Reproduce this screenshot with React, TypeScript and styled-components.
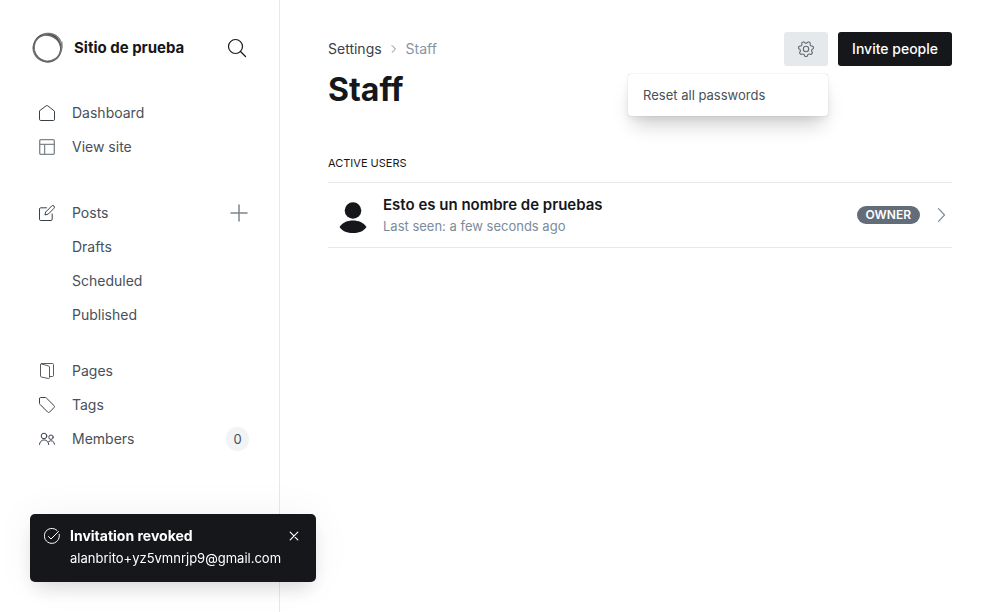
import React from "react";
import styled, { createGlobalStyle } from "styled-components";

const GlobalStyle = createGlobalStyle`
  *, *::before, *::after { box-sizing: border-box; }
  body {
    margin: 0;
    background: #fff;
    color: #15171a;
    font-family: Inter, "Liberation Sans", sans-serif;
    font-size: 14px;
    line-height: 20px;
  }
  h1, h2, h3, p, ul, ol { margin: 0; padding: 0; }
  ul, ol { list-style: none; }
  a { color: inherit; text-decoration: none; }
  button { font: inherit; color: inherit; border: 0; padding: 0; background: none; cursor: pointer; }
  svg { display: block; flex: none; }
`;

const Page = styled.div`
  display: flex;
  min-height: 100vh;
`;

const Sidebar = styled.aside`
  flex: none;
  width: 280px;
  padding: 32px 30px 32px 32px;
  border-right: 1px solid #e6e9eb;
`;

const SiteHeader = styled.header`
  display: flex;
  align-items: center;
  height: 32px;
  margin-bottom: 32px;
`;

const SiteName = styled.span`
  flex: 1;
  margin-left: 10px;
  font-size: 15px;
  font-weight: 700;
`;

const SearchButton = styled.button`
  margin-right: 2px;
`;

const NavGroup = styled.ul<{ $gap: number }>`
  margin-top: ${(p) => p.$gap}px;
`;

const NavItem = styled.li`
  display: flex;
  align-items: center;
  justify-content: space-between;
  height: 34px;
`;

const NavLink = styled.a`
  display: flex;
  flex: 1;
  align-items: center;
  color: #485059;
`;

const NavIcon = styled.span`
  display: flex;
  justify-content: center;
  width: 30px;
  margin-right: 10px;
`;

const Count = styled.span`
  min-width: 23px;
  border-radius: 12px;
  background: #f1f3f4;
  color: #485059;
  font-size: 13px;
  line-height: 24px;
  text-align: center;
`;

const Main = styled.main`
  flex: 1;
  min-width: 0;
  padding: 32px 48px;
`;

const PageHeader = styled.header`
  display: flex;
  justify-content: space-between;
  align-items: flex-start;
`;

const Breadcrumb = styled.ol`
  display: flex;
  align-items: center;
  gap: 8px;
  height: 34px;
`;

const Crumb = styled.li<{ $current?: boolean }>`
  color: ${(p) => (p.$current ? "#8695a4" : "#394047")};
`;

const Title = styled.h1`
  font-size: 32px;
  font-weight: 700;
  line-height: 48px;
`;

const Actions = styled.div`
  display: flex;
  gap: 10px;
`;

const MenuAnchor = styled.div`
  position: relative;
`;

const GearButton = styled.button`
  display: flex;
  align-items: center;
  justify-content: center;
  width: 44px;
  height: 34px;
  border-radius: 3px;
  background: #e6e9eb;
`;

const InviteButton = styled.button`
  height: 34px;
  padding: 0 14px;
  border-radius: 3px;
  background: #15171a;
  color: #fff;
  font-weight: 500;
`;

const Menu = styled.ul`
  position: absolute;
  top: 42px;
  right: 0;
  width: 200px;
  padding: 6px 0;
  border-radius: 3px;
  background: #fff;
  box-shadow: 0 0 1px rgba(0, 0, 0, 0.3), 0 3px 7px rgba(0, 0, 0, 0.05), 0 13px 20px -5px rgba(0, 0, 0, 0.2);
`;

const MenuItem = styled.button`
  width: 100%;
  padding: 0 15px;
  color: #485059;
  font-size: 13px;
  line-height: 30px;
  text-align: left;
`;

const SectionLabel = styled.h2`
  margin: 40px 0 10px;
  font-size: 11px;
  font-weight: 400;
  line-height: 18px;
  text-transform: uppercase;
`;

const UserList = styled.ul`
  border-top: 1px solid #e6e9eb;
`;

const UserRow = styled.a`
  display: flex;
  align-items: center;
  height: 65px;
  padding: 0 4px 0 10px;
  border-bottom: 1px solid #e6e9eb;
`;

const UserText = styled.div`
  flex: 1;
  margin-left: 15px;
`;

const UserName = styled.h3`
  font-size: 15px;
  font-weight: 600;
  line-height: 22px;
`;

const LastSeen = styled.p`
  color: #7c8b9a;
  font-size: 13px;
  line-height: 20px;
`;

const RoleBadge = styled.span`
  margin-right: 14px;
  padding: 0 9px;
  border-radius: 9px;
  background: #626d79;
  color: #fff;
  font-size: 12px;
  font-weight: 600;
  line-height: 18px;
`;

const Toast = styled.div`
  position: fixed;
  left: 30px;
  bottom: 30px;
  display: flex;
  align-items: flex-start;
  width: 286px;
  padding: 11px 17px 12px 14px;
  border-radius: 5px;
  background: #15171a;
  color: #fff;
  box-shadow: 0 0 40px rgba(0, 0, 0, 0.05), 0 10px 20px -5px rgba(0, 0, 0, 0.15);
`;

const ToastText = styled.div`
  flex: 1;
  margin-left: 10px;
`;

const ToastTitle = styled.p`
  font-weight: 700;
  line-height: 22px;
`;

const ToastDetail = styled.p`
  font-size: 13px;
  line-height: 23px;
`;

const ToastIcon = styled.span`
  display: flex;
  align-items: center;
  height: 22px;
`;

const ToastClose = styled.button`
  display: flex;
  align-items: center;
  height: 22px;
`;

type IconProps = { size?: number; box?: number; color?: string; width?: number; children: React.ReactNode };

const Icon = ({ size = 16, box = 16, color = "#394047", width = 1, children }: IconProps) => (
  <svg
    width={size}
    height={size}
    viewBox={`0 0 ${box} ${box}`}
    fill="none"
    stroke={color}
    strokeWidth={width}
    strokeLinecap="round"
    strokeLinejoin="round"
    aria-hidden="true"
  >
    {children}
  </svg>
);

const icons = {
  home: (
    <Icon>
      <path d="M.5 6.2v8.1c0 .7.5 1.2 1.2 1.2h12.6c.7 0 1.2-.5 1.2-1.2V6.2L8.8.8a1.3 1.3 0 0 0-1.6 0Z" />
    </Icon>
  ),
  layout: (
    <Icon color="#7d858d" width={1.3}>
      <rect x=".7" y=".7" width="14.600" height="14.600" rx="1.2" />
      <path d="M.7 5.300h14.600M5.600 5.300v10" />
    </Icon>
  ),
  edit: (
    <Icon>
      <path d="M7.500 2.8H1.7C1 2.800.5 3.300.5 4v10.300c0 .7.5 1.2 1.2 1.2h10.300c.7 0 1.200-.5 1.200-1.200V9" />
      <path d="M8.900 9.200 5.900 10l.8-3L12.700 1a1.600 1.600 0 0 1 2.300 0 1.600 1.600 0 0 1 0 2.300Z" />
    </Icon>
  ),
  pages: (
    <Icon color="#555d66">
      <path d="M1.500 1.700v11.500c0 .4.300.7.700.8l7.300 1.500c.6.100 1-.3 1-.8V4c0-.5-.3-.9-.8-1L2.300.900c-.5-.1-.8.300-.8.800Z" />
      <path d="M2.300.5h11.200c.6 0 1 .4 1 1v11c0 .6-.4 1-1 1h-3" />
    </Icon>
  ),
  tag: (
    <Icon>
      <path d="M.5 1.500v4.800c0 .4.200.8.500 1.100l7.700 7.700c.5.500 1.300.5 1.800 0l4.600-4.600c.5-.5.5-1.300 0-1.800L7.400 1c-.3-.3-.7-.5-1.100-.5H1.500a1 1 0 0 0-1 1Z" />
    </Icon>
  ),
  members: (
    <Icon>
      <circle cx="5" cy="5" r="2.800" />
      <circle cx="12" cy="6.200" r="2.200" />
      <path d="M.5 13.500a4.600 4.600 0 0 1 9.200 0M9.700 10.500a3.600 3.600 0 0 1 5.800 2.700" />
    </Icon>
  ),
};

const SiteLogo = () => (
  <svg width="32" height="32" viewBox="0 0 32 32" fill="none" aria-hidden="true">
    <path
      d="M9 3.500C14 .3 22 .8 27 5.500c3.500 5 4 11 1.500 16.500C27 26 23 29 19 30c6-3.500 9.500-9 9-14.500C27.500 9 22 3 9 3.500Z"
      fill="#bbb"
    />
    <ellipse cx="15.500" cy="16.500" rx="14" ry="13.300" stroke="#444" strokeWidth="1.400" transform="rotate(60 16 16)" />
    <ellipse cx="16.500" cy="15.500" rx="14" ry="13.400" stroke="#777" strokeWidth="1" transform="rotate(-35 16 16)" />
    <ellipse cx="15.200" cy="17" rx="14" ry="13.200" stroke="#666" strokeWidth="1" transform="rotate(20 16 16)" />
    <path d="M9 3C15-.5 24 .8 28 7.500M30 9.500c.8 7-1.500 13.500-8 18.500" stroke="#777" strokeWidth=".8" />
  </svg>
);

const GearIcon = () => {
  const teeth = 7;
  const points: string[] = [];
  for (let i = 0; i < teeth * 20; i++) {
    const a = (i / (teeth * 20)) * Math.PI * 2 - Math.PI / 2;
    const wave = Math.tanh(2 * Math.cos(teeth * (a + Math.PI / 2) + Math.PI));
    const r = 6.7 + wave * 0.9;
    points.push(`${(8 + r * Math.cos(a)).toFixed(2)} ${(8 + r * Math.sin(a)).toFixed(2)}`);
  }
  return (
    <Icon color="#626b74" width={1.1}>
      <path d={`M${points.join("L")}Z`} />
      <circle cx="8" cy="8" r="2.700" />
    </Icon>
  );
};

type Entry = { label: string; icon?: React.ReactNode; extra?: React.ReactNode };

const groups: { gap: number; entries: Entry[] }[] = [
  {
    gap: 0,
    entries: [
      { label: "Dashboard", icon: icons.home },
      { label: "View site", icon: icons.layout },
    ],
  },
  {
    gap: 32,
    entries: [
      {
        label: "Posts",
        icon: icons.edit,
        extra: (
          <button type="button" aria-label="New post">
            <Icon size={20} box={20} color="#7d858d" width={1.5}>
              <path d="M10 2v16M2 10h16" />
            </Icon>
          </button>
        ),
      },
      { label: "Drafts" },
      { label: "Scheduled" },
      { label: "Published" },
    ],
  },
  {
    gap: 22,
    entries: [
      { label: "Pages", icon: icons.pages },
      { label: "Tags", icon: icons.tag },
      { label: "Members", icon: icons.members, extra: <Count>0</Count> },
    ],
  },
];

export default function App() {
  return (
    <>
      <GlobalStyle />
      <Page>
        <Sidebar>
          <SiteHeader>
            <SiteLogo />
            <SiteName>Sitio de prueba</SiteName>
            <SearchButton type="button" aria-label="Search">
              <Icon size={20} box={20} color="#15171a" width={1.2}>
                <circle cx="8.500" cy="8.500" r="7" />
                <path d="m13.500 13.500 5 5" />
              </Icon>
            </SearchButton>
          </SiteHeader>
          <nav>
            {groups.map((group, i) => (
              <NavGroup key={i} $gap={group.gap}>
                {group.entries.map((entry) => (
                  <NavItem key={entry.label}>
                    <NavLink href="#">
                      <NavIcon>{entry.icon}</NavIcon>
                      {entry.label}
                    </NavLink>
                    {entry.extra}
                  </NavItem>
                ))}
              </NavGroup>
            ))}
          </nav>
        </Sidebar>
        <Main>
          <PageHeader>
            <div>
              <Breadcrumb>
                <Crumb>
                  <a href="#">Settings</a>
                </Crumb>
                <Icon size={8} box={8} color="#7c8b9a">
                  <path d="m2 .5 3.500 3.500L2 7.500" />
                </Icon>
                <Crumb $current>Staff</Crumb>
              </Breadcrumb>
              <Title>Staff</Title>
            </div>
            <Actions>
              <MenuAnchor>
                <GearButton type="button" aria-label="Actions" aria-expanded="true">
                  <GearIcon />
                </GearButton>
                <Menu>
                  <li>
                    <MenuItem type="button">Reset all passwords</MenuItem>
                  </li>
                </Menu>
              </MenuAnchor>
              <InviteButton type="button">Invite people</InviteButton>
            </Actions>
          </PageHeader>
          <section>
            <SectionLabel>Active users</SectionLabel>
            <UserList>
              <li>
                <UserRow href="#">
                  <svg width="30" height="36" viewBox="0 0 30 36" fill="#15171a" aria-hidden="true">
                    <circle cx="15" cy="13.500" r="8.300" />
                    <path d="M1.500 30C4.500 25.500 9.500 23.500 15 23.500S25.500 25.500 28.500 30c-3 4.500-8 6-13.500 6S4.500 34.500 1.500 30Z" />
                  </svg>
                  <UserText>
                    <UserName>Esto es un nombre de pruebas</UserName>
                    <LastSeen>Last seen: a few seconds ago</LastSeen>
                  </UserText>
                  <RoleBadge>OWNER</RoleBadge>
                  <Icon size={14} box={14} color="#7c8b9a" width={1.2}>
                    <path d="m4.500 .7 6 6.300-6 6.300" />
                  </Icon>
                </UserRow>
              </li>
            </UserList>
          </section>
        </Main>
      </Page>
      <Toast role="status">
        <ToastIcon>
          <Icon color="#fff">
            <path d="M4.500 8.500 7 11l7.500-7.500" />
            <path d="M15.200 6.300A7.500 7.500 0 1 1 13 2.400" />
          </Icon>
        </ToastIcon>
        <ToastText>
          <ToastTitle>Invitation revoked</ToastTitle>
          <ToastDetail>alanbrito+yz5vmnrjp9@gmail.com</ToastDetail>
        </ToastText>
        <ToastClose type="button" aria-label="Close">
          <Icon size={10} box={10} color="#fff" width={1.2}>
            <path d="m1.200 1.200 7.600 7.600M8.800 1.200 1.200 8.800" />
          </Icon>
        </ToastClose>
      </Toast>
    </>
  );
}
